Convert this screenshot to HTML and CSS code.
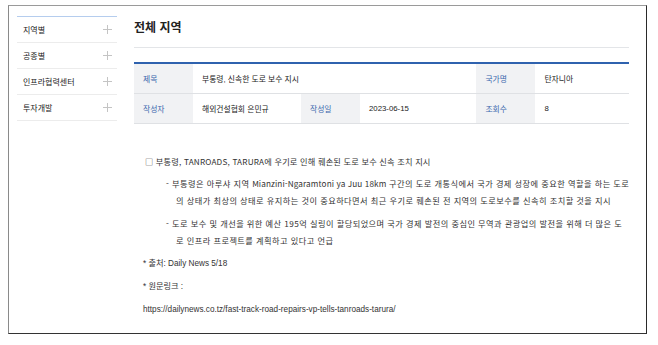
FILE: index.html
```html
<!DOCTYPE html>
<html lang="ko">

<head>
	<meta charset="UTF-8">
	<meta name="viewport" content="width=device-width, initial-scale=1.0">
	<title>전체 지역</title>
	<link rel="stylesheet" href="styles.css">
</head>

<body>
	<div class="frame">
		<!--좌측 메뉴-->
		<ul class="side">
			<li class="side__item">지역별<span class="plus"></span></li>
			<li class="side__item">공종별<span class="plus"></span></li>
			<li class="side__item">인프라협력센터<span class="plus"></span></li>
			<li class="side__item">투자개발<span class="plus"></span></li>
		</ul>
		<!--본문-->
		<div class="content">
			<h2 class="content__title">전체 지역</h2>
			<table class="info">
				<tr>
					<th>제목</th>
					<td colspan="3">부통령, 신속한 도로 보수 지시</td>
					<th>국가명</th>
					<td>탄자니아</td>
				</tr>
				<tr>
					<th>작성자</th>
					<td class="info__writer">해외건설협회 은민규</td>
					<th>작성일</th>
					<td>2023-06-15</td>
					<th>조회수</th>
					<td>8</td>
				</tr>
			</table>
			<div class="article">
				<p class="article__head">□ 부통령, TANROADS, TARURA에 우기로 인해 훼손된 도로 보수 신속 조치 지시</p>
				<p class="article__dash">
					<span class="line">- 부통령은 아루샤 지역 <span class="en">Mianzini-Ngaramtoni ya Juu 18km</span> 구간의 도로 개통식에서 국가 경제 성장에 중요한 역할을 하는 도로</span>
					<span class="line line--cont">의 상태가 최상의 상태로 유지하는 것이 중요하다면서 최근 우기로 훼손된 전 지역의 도로보수를 신속히 조치할 것을 지시</span>
				</p>
				<p class="article__dash">
					<span class="line">- 도로 보수 및 개선을 위한 예산 195억 실링이 할당되었으며 국가 경제 발전의 중심인 무역과 관광업의 발전을 위해 더 많은 도</span>
					<span class="line line--cont">로 인프라 프로젝트를 계획하고 있다고 언급</span>
				</p>
				<p class="article__note">* 출처: Daily News 5/18</p>
				<p class="article__note">* 원문링크 :</p>
				<p class="article__note">https://dailynews.co.tz/fast-track-road-repairs-vp-tells-tanroads-tarura/</p>
			</div>
		</div>
	</div>
</body>

</html>
```

FILE: styles.css
```css
* {
	margin: 0;
	padding: 0;
	box-sizing: border-box;
}

body {
	background: #fff;
	font-family: "Noto Sans CJK KR", "Liberation Sans", sans-serif;
	color: #333;
}

.frame {
	display: flex;
	width: 639px;
	height: 329px;
	margin: 5px 0 0 8px;
	border-top: solid 1px #9a9a9a;
	border-left: solid 1px #8a8a8a;
	border-right: solid 1px #2a2a2a;
	border-bottom: solid 1px #333;
	padding: 10px 25px 0 8px;
}

/* 좌측 메뉴 */
.side {
	list-style: none;
	width: 100px;
	flex: none;
	border-top: solid 1px #b5cdee;
}

.side__item {
	display: flex;
	align-items: center;
	justify-content: space-between;
	height: 26px;
	padding: 0 5px 0 6px;
	border-bottom: solid 1px #ececec;
	font-size: 8px;
	color: #222;
}

.plus {
	position: relative;
	width: 9px;
	height: 9px;
}

.plus::before,
.plus::after {
	content: "";
	position: absolute;
	background: #c4c4c4;
}

.plus::before {
	left: 4px;
	top: 0;
	width: 1px;
	height: 9px;
}

.plus::after {
	left: 0;
	top: 4px;
	width: 9px;
	height: 1px;
}

/* 본문 */
.content {
	flex: 1;
	margin-left: 17px;
}

.content__title {
	font-size: 12px;
	font-weight: bold;
	color: #222;
	line-height: 18px;
	padding: 2px 0 11px;
	border-bottom: solid 1px #e3e5e8;
	margin-bottom: 14px;
}

.info {
	width: 100%;
	border-collapse: collapse;
	border-top: solid 2px #2f62ae;
	font-family: "Liberation Sans", "Noto Sans CJK KR", sans-serif;
	font-size: 7.8px;
}

.info th,
.info td {
	height: 30px;
	padding: 0 9px;
	text-align: left;
	border-bottom: solid 1px #dfe1e4;
	white-space: nowrap;
}

.info th {
	width: 59px;
	background: #f1f2f4;
	font-weight: normal;
	color: #3a66ad;
}

.info td {
	color: #222;
}

.info__writer {
	width: 108px;
}

.article {
	padding: 28px 0 0 9px;
	font-size: 8.2px;
	color: #333;
	line-height: 18px;
	letter-spacing: 0.45px;
}

.article p {
	margin-bottom: 5px;
}

.article__head {
	padding-left: 2px;
	letter-spacing: 0.18px;
}

.article__dash {
	padding-left: 23px;
}

.line {
	display: block;
	white-space: nowrap;
	line-height: 17.5px;
}

.line--cont {
	padding-left: 10px;
}

.en {
	letter-spacing: 0.1px;
}

.article__note {
	font-family: "Liberation Sans", "Noto Sans CJK KR", sans-serif;
	font-size: 8.2px;
	letter-spacing: 0;
}
```
